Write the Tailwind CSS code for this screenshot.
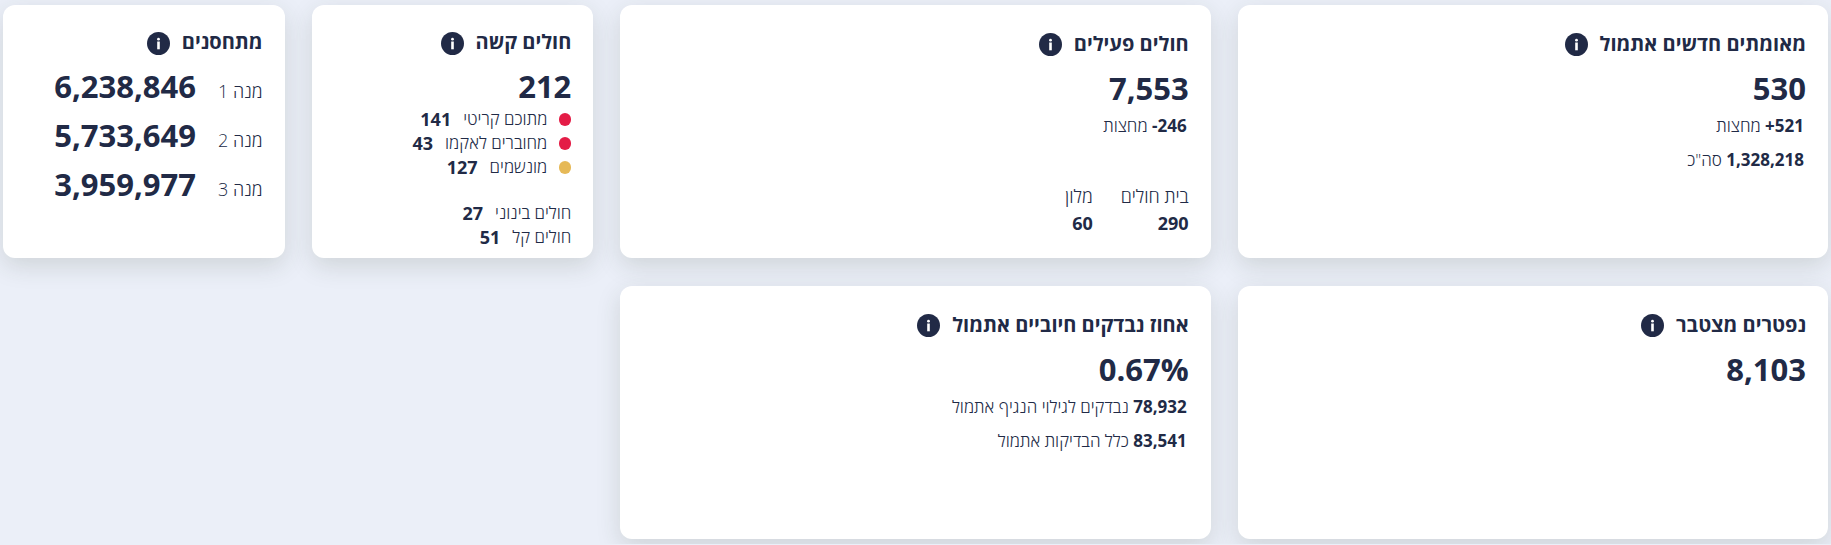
<!DOCTYPE html>
<html lang="he" dir="rtl">
  <head>
    <meta charset="UTF-8" />
    <meta name="viewport" content="width=device-width, initial-scale=1.0" />
    <script src="https://cdn.jsdelivr.net/npm/@tailwindcss/browser@4"></script>
    <title>נתונים כלליים</title>
  </head>
  <body class="bg-[#ebeff8] font-['Open_Sans','Noto_Sans',sans-serif] text-[#212a46]">
    <!-- info icon, shared by all the cards -->
    <svg class="hidden">
      <symbol id="info" viewBox="0 0 23 23">
        <circle cx="11.5" cy="11.5" r="11.5" fill="#212a46" />
        <circle cx="11.5" cy="7.2" r="1.4" fill="#fff" />
        <rect x="10.2" y="9.5" width="2.6" height="7.8" fill="#fff" />
      </symbol>
    </svg>

    <main class="grid auto-rows-[minmax(253px,auto)] grid-cols-6 gap-x-[27px] gap-y-7 px-[3px] py-[5px]">
      <section class="col-span-2 rounded-xl bg-white px-[22px] pt-[27px] shadow-[0_8px_24px_rgba(50,60,40,0.15)]">
        <header class="flex items-center gap-3">
          <h2 class="text-[20px] leading-6 font-bold">מאומתים חדשים אתמול</h2>
          <button type="button" aria-label="מידע"><svg class="size-[23px]"><use href="#info" /></svg></button>
        </header>
        <p class="mt-[11px] text-[31px] leading-[42px] font-bold">530</p>
        <p class="px-0.5 text-[17px] leading-[34px] font-light"><b class="font-bold" dir="ltr">+521</b> מחצות</p>
        <p class="px-0.5 text-[17px] leading-[34px] font-light"><b class="font-bold">1,328,218</b> סה"כ</p>
      </section>

      <section class="col-span-2 rounded-xl bg-white px-[22px] pt-[27px] shadow-[0_8px_24px_rgba(50,60,40,0.15)]">
        <header class="flex items-center gap-3">
          <h2 class="text-[20px] leading-6 font-bold">חולים פעילים</h2>
          <button type="button" aria-label="מידע"><svg class="size-[23px]"><use href="#info" /></svg></button>
        </header>
        <p class="mt-[11px] text-[31px] leading-[42px] font-bold">7,553</p>
        <p class="px-0.5 text-[17px] leading-[34px] font-light"><b class="font-bold" dir="ltr">-246</b> מחצות</p>
        <dl class="mt-10 flex gap-7 text-[18px] leading-[27px]">
          <div>
            <dt class="font-light">בית חולים</dt>
            <dd class="font-bold">290</dd>
          </div>
          <div>
            <dt class="font-light">מלון</dt>
            <dd class="font-bold">60</dd>
          </div>
        </dl>
      </section>

      <section class="rounded-xl bg-white px-[22px] pt-[27px] shadow-[0_8px_24px_rgba(50,60,40,0.15)]">
        <header class="flex items-start gap-3">
          <h2 class="text-[20px] leading-5 font-bold">חולים קשה</h2>
          <button type="button" aria-label="מידע"><svg class="size-[23px]"><use href="#info" /></svg></button>
        </header>
        <p class="mt-2.5 text-[31px] leading-[42px] font-bold">212</p>
        <ul class="text-[17px] leading-6 font-light">
          <li class="flex items-center gap-3">
            <span class="h-[13px] w-3 rounded-full bg-[#e41c46]"></span>
            <span>מתוכם קריטי</span>
            <b class="text-[18px] leading-6 font-bold">141</b>
          </li>
          <li class="flex items-center gap-3">
            <span class="h-[13px] w-3 rounded-full bg-[#e41c46]"></span>
            <span>מחוברים לאקמו</span>
            <b class="text-[18px] leading-6 font-bold">43</b>
          </li>
          <li class="flex items-center gap-3">
            <span class="h-[13px] w-3 rounded-full bg-[#e6b957]"></span>
            <span>מונשמים</span>
            <b class="text-[18px] leading-6 font-bold">127</b>
          </li>
        </ul>
        <ul class="mt-[22px] text-[17px] leading-6 font-light">
          <li class="flex gap-3"><span>חולים בינוני</span><b class="text-[18px] leading-6 font-bold">27</b></li>
          <li class="flex gap-3"><span>חולים קל</span><b class="text-[18px] leading-6 font-bold">51</b></li>
        </ul>
      </section>

      <section class="rounded-xl bg-white px-[22px] pt-[27px] shadow-[0_8px_24px_rgba(50,60,40,0.15)]">
        <header class="flex items-start gap-3">
          <h2 class="text-[20px] leading-5 font-bold">מתחסנים</h2>
          <button type="button" aria-label="מידע"><svg class="size-[23px]"><use href="#info" /></svg></button>
        </header>
        <dl class="mt-[7px]">
          <div class="flex items-baseline gap-[22px]">
            <dt class="text-[18px] font-light">מנה 1</dt>
            <dd class="text-[31px] leading-[49px] font-bold">6,238,846</dd>
          </div>
          <div class="flex items-baseline gap-[22px]">
            <dt class="text-[18px] font-light">מנה 2</dt>
            <dd class="text-[31px] leading-[49px] font-bold">5,733,649</dd>
          </div>
          <div class="flex items-baseline gap-[22px]">
            <dt class="text-[18px] font-light">מנה 3</dt>
            <dd class="text-[31px] leading-[49px] font-bold">3,959,977</dd>
          </div>
        </dl>
      </section>

      <section class="col-span-2 rounded-xl bg-white px-[22px] pt-[27px] shadow-[0_8px_24px_rgba(50,60,40,0.15)]">
        <header class="flex items-center gap-3">
          <h2 class="text-[20px] leading-6 font-bold">נפטרים מצטבר</h2>
          <button type="button" aria-label="מידע"><svg class="size-[23px]"><use href="#info" /></svg></button>
        </header>
        <p class="mt-[11px] text-[31px] leading-[42px] font-bold">8,103</p>
      </section>

      <section class="col-span-2 rounded-xl bg-white px-[22px] pt-[27px] shadow-[0_8px_24px_rgba(50,60,40,0.15)]">
        <header class="flex items-center gap-3">
          <h2 class="text-[20px] leading-6 font-bold">אחוז נבדקים חיוביים אתמול</h2>
          <button type="button" aria-label="מידע"><svg class="size-[23px]"><use href="#info" /></svg></button>
        </header>
        <p class="mt-[11px] text-[31px] leading-[42px] font-bold"><span dir="ltr">0.67%</span></p>
        <p class="px-0.5 text-[17px] leading-[34px] font-light"><b class="font-bold">78,932</b> נבדקים לגילוי הנגיף אתמול</p>
        <p class="px-0.5 text-[17px] leading-[34px] font-light"><b class="font-bold">83,541</b> כלל הבדיקות אתמול</p>
      </section>
    </main>
  </body>
</html>
